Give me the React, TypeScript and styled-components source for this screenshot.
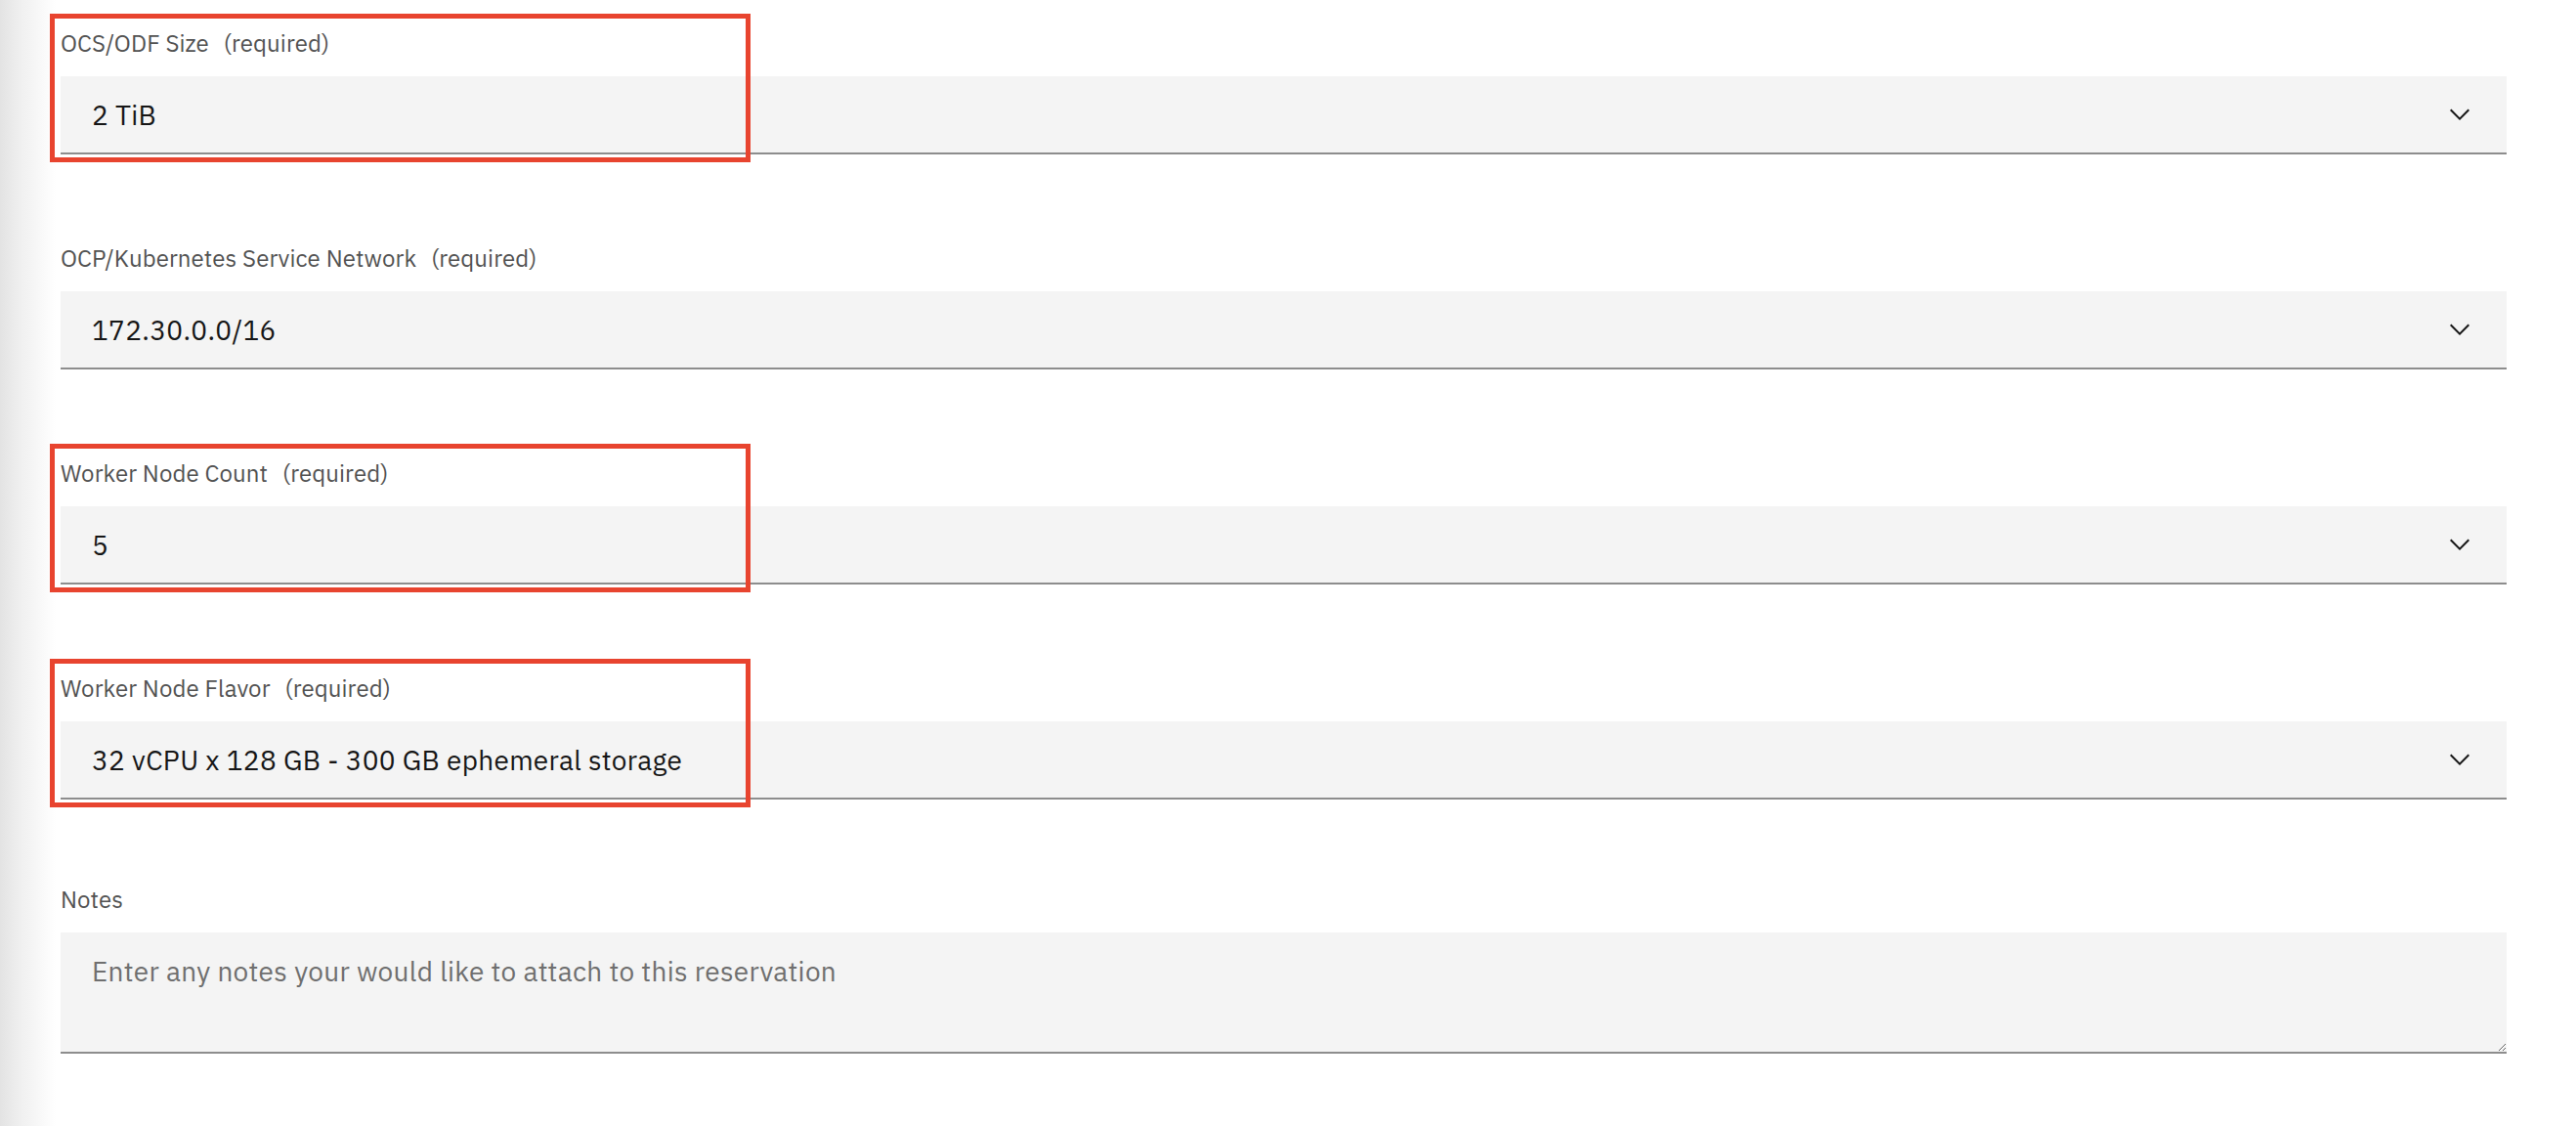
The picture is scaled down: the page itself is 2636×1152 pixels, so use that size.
import React from "react";
import styled, { createGlobalStyle } from "styled-components";

const GlobalStyle = createGlobalStyle`
    html, body {
        margin: 0;
        padding: 0;
        background: #ffffff;
    }
    body {
        font-family: "IBM Plex Sans", Inter, "Noto Sans", "Liberation Sans", sans-serif;
        -webkit-font-smoothing: antialiased;
    }
    * {
        box-sizing: border-box;
    }
`;

const Page = styled.div`
    display: flex;
    min-height: 1152px;
    width: 2636px;
    background: #ffffff;
`;

const Edge = styled.div`
    width: 57px;
    flex-shrink: 0;
    background: linear-gradient(to right, #e3e3e3 0%, #efefef 35%, #f9f9f9 75%, #ffffff 100%);
`;

const Form = styled.form`
    width: 2508px;
    padding: 30px 0 0 5px;
    display: flex;
    flex-direction: column;
`;

const FormItem = styled.div<{ $spacing: number }>`
    position: relative;
    display: flex;
    flex-direction: column;
    margin-bottom: ${(p) => p.$spacing}px;
`;

const Label = styled.label`
    display: flex;
    align-items: center;
    height: 32px;
    padding-bottom: 5px;
    margin-bottom: 16px;
    font-size: 24px;
    letter-spacing: 0.1px;
    color: #525252;
`;

const Required = styled.span`
    margin-left: 15px;
`;

const SelectField = styled.div`
    display: flex;
    align-items: center;
    justify-content: space-between;
    height: 80px;
    padding: 0 32px 0 32px;
    background: #f4f4f4;
    border-bottom: 2px solid #8d8d8d;
    font-size: 28px;
    letter-spacing: 0.3px;
    color: #161616;
    cursor: pointer;
`;

const Chevron = styled.svg`
    width: 32px;
    height: 32px;
    fill: #161616;
    flex-shrink: 0;
`;

const NotesArea = styled.textarea`
    display: block;
    width: 100%;
    height: 124px;
    padding: 20px 32px;
    border: none;
    border-bottom: 2px solid #8d8d8d;
    background: #f4f4f4;
    font-family: inherit;
    font-size: 28px;
    line-height: 40px;
    letter-spacing: 0.3px;
    color: #161616;
    resize: vertical;
    outline: none;
    &::placeholder {
        color: #6f6f6f;
    }
`;

const Highlight = styled.div`
    position: absolute;
    top: -16px;
    left: -11px;
    width: 717px;
    height: 152px;
    border: 5px solid #e8442f;
    pointer-events: none;
`;

type Field = {
    label: string;
    value: string;
    required: boolean;
    highlighted: boolean;
};

const fields: Field[] = [
    { label: "OCS/ODF Size", value: "2 TiB", required: true, highlighted: true },
    { label: "OCP/Kubernetes Service Network", value: "172.30.0.0/16", required: true, highlighted: false },
    { label: "Worker Node Count", value: "5", required: true, highlighted: true },
    {
        label: "Worker Node Flavor",
        value: "32 vCPU x 128 GB - 300 GB ephemeral storage",
        required: true,
        highlighted: true,
    },
];

const ChevronDown = () => (
    <Chevron viewBox="0 0 16 16" aria-hidden="true">
        <path d="M8 11L3 6 3.7 5.3 8 9.6 12.3 5.3 13 6z" />
    </Chevron>
);

const App = () => {
    return (
        <>
            <GlobalStyle />
            <Page>
                <Edge />
                <Form onSubmit={(e) => e.preventDefault()}>
                    {fields.map((field, i) => (
                        <FormItem key={field.label} $spacing={i === fields.length - 1 ? 88 : 92}>
                            <Label>
                                {field.label}
                                {field.required && <Required>(required)</Required>}
                            </Label>
                            <SelectField role="combobox">
                                <span>{field.value}</span>
                                <ChevronDown />
                            </SelectField>
                            {field.highlighted && <Highlight />}
                        </FormItem>
                    ))}
                    <FormItem $spacing={0}>
                        <Label htmlFor="notes">Notes</Label>
                        <NotesArea
                            id="notes"
                            placeholder="Enter any notes your would like to attach to this reservation"
                        />
                    </FormItem>
                </Form>
            </Page>
        </>
    );
};

export default App;
